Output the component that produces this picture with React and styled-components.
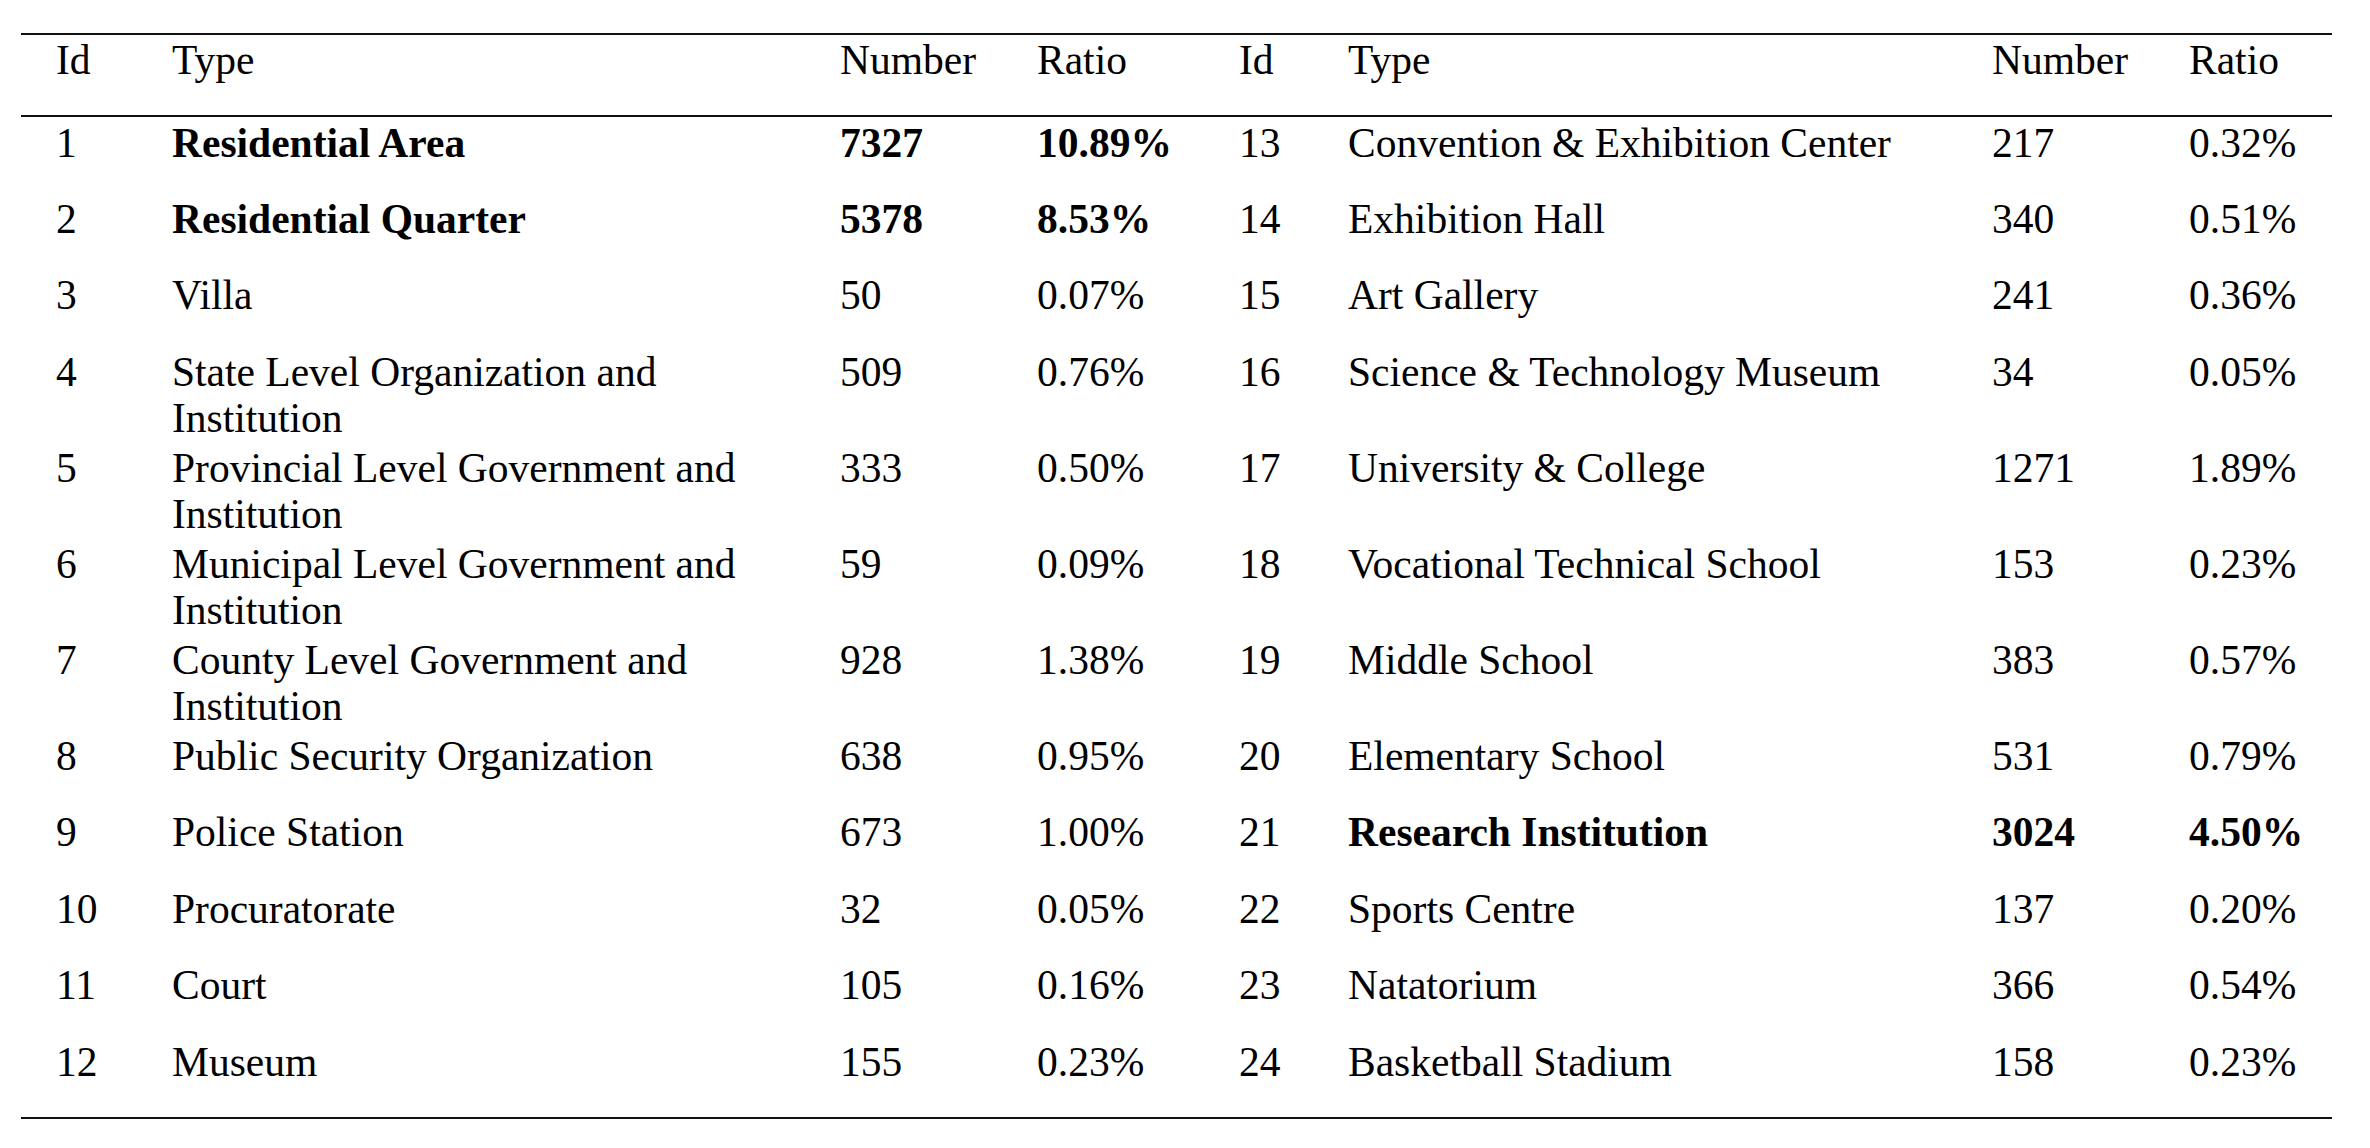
import React from "react";
import styled, { createGlobalStyle } from "styled-components";

const GlobalStyle = createGlobalStyle`
  html, body {
    margin: 0;
    padding: 0;
    background: #ffffff;
  }
  body {
    font-family: "Liberation Serif", "Times New Roman", serif;
    color: #000000;
  }
`;

const Page = styled.div`
  padding: 33px 38px 0 21px;
`;

const Table = styled.table`
  width: 2311px;
  table-layout: fixed;
  border-collapse: collapse;
  border-top: 2px solid #111;
  border-bottom: 2px solid #111;
  font-family: "Liberation Serif", "Times New Roman", serif;
  font-size: 41.5px;
  line-height: 46.5px;
  color: #000;
`;

const HeadCell = styled.th`
  height: 82px;
  box-sizing: border-box;
  padding: 2px ${(p) => p.$padRight || 0}px 0 ${(p) => p.$padLeft || 0}px;
  text-align: left;
  vertical-align: top;
  font-weight: 400;
  border-bottom: 2px solid #111;
`;

const Row = styled.tr`
  height: 76.5px;
  &:last-child {
    height: 82px;
  }
`;

const Cell = styled.td`
  box-sizing: border-box;
  padding: 3px ${(p) => p.$padRight || 0}px 0 ${(p) => p.$padLeft || 0}px;
  vertical-align: top;
  text-align: left;
  font-weight: ${(p) => (p.$bold ? 700 : 400)};
`;

const widths = [151, 668, 197, 202, 109, 644, 197, 143];

const left = [
  [1, "Residential Area", 7327, "10.89%", true],
  [2, "Residential Quarter", 5378, "8.53%", true],
  [3, "Villa", 50, "0.07%"],
  [4, "State Level Organization and Institution", 509, "0.76%"],
  [5, "Provincial Level Government and Institution", 333, "0.50%"],
  [6, "Municipal Level Government and Institution", 59, "0.09%"],
  [7, "County Level Government and Institution", 928, "1.38%"],
  [8, "Public Security Organization", 638, "0.95%"],
  [9, "Police Station", 673, "1.00%"],
  [10, "Procuratorate", 32, "0.05%"],
  [11, "Court", 105, "0.16%"],
  [12, "Museum", 155, "0.23%"],
];

const right = [
  [13, "Convention & Exhibition Center", 217, "0.32%"],
  [14, "Exhibition Hall", 340, "0.51%"],
  [15, "Art Gallery", 241, "0.36%"],
  [16, "Science & Technology Museum", 34, "0.05%"],
  [17, "University & College", 1271, "1.89%"],
  [18, "Vocational Technical School", 153, "0.23%"],
  [19, "Middle School", 383, "0.57%"],
  [20, "Elementary School", 531, "0.79%"],
  [21, "Research Institution", 3024, "4.50%", true],
  [22, "Sports Centre", 137, "0.20%"],
  [23, "Natatorium", 366, "0.54%"],
  [24, "Basketball Stadium", 158, "0.23%"],
];

const headers = ["Id", "Type", "Number", "Ratio", "Id", "Type", "Number", "Ratio"];

export default function App() {
  return (
    <>
      <GlobalStyle />
      <Page>
        <Table>
          <colgroup>
            {widths.map((w, i) => (
              <col key={i} style={{ width: w }} />
            ))}
          </colgroup>
          <thead>
            <tr>
              {headers.map((h, i) => (
                <HeadCell key={i} $padLeft={i === 0 ? 35 : 0}>
                  {h}
                </HeadCell>
              ))}
            </tr>
          </thead>
          <tbody>
            {left.map((l, i) => {
              const r = right[i];
              return (
                <Row key={l[0]}>
                  <Cell $padLeft={35}>{l[0]}</Cell>
                  <Cell $bold={l[4]} $padRight={30}>{l[1]}</Cell>
                  <Cell $bold={l[4]}>{l[2]}</Cell>
                  <Cell $bold={l[4]}>{l[3]}</Cell>
                  <Cell>{r[0]}</Cell>
                  <Cell $bold={r[4]} $padRight={30}>{r[1]}</Cell>
                  <Cell $bold={r[4]}>{r[2]}</Cell>
                  <Cell $bold={r[4]}>{r[3]}</Cell>
                </Row>
              );
            })}
          </tbody>
        </Table>
      </Page>
    </>
  );
}
